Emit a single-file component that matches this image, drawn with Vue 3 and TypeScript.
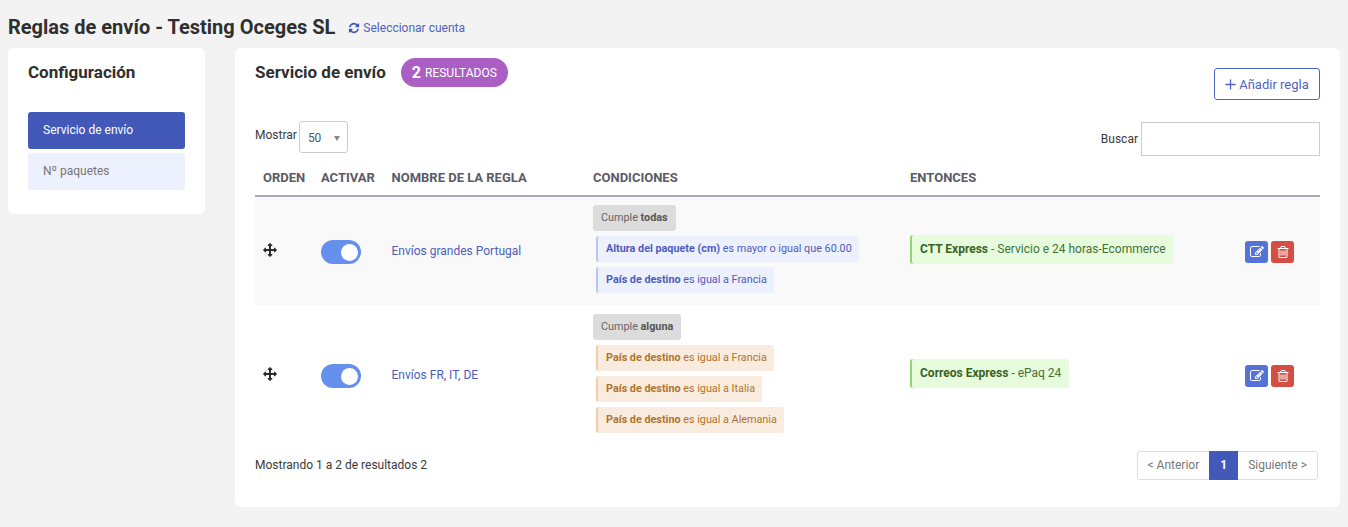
<script setup lang="ts">
interface Cond { field: string; text: string }
interface Rule {
  name: string
  mode: string
  tone: string
  conds: Cond[]
  carrier: string
  service: string
}
const rules: Rule[] = [
  {
    name: 'Envíos grandes Portugal',
    mode: 'todas',
    tone: 'blue',
    conds: [
      { field: 'Altura del paquete (cm)', text: 'es mayor o igual que 60.00' },
      { field: 'País de destino', text: 'es igual a Francia' }
    ],
    carrier: 'CTT Express',
    service: ' - Servicio e 24 horas-Ecommerce'
  },
  {
    name: 'Envíos FR, IT, DE',
    mode: 'alguna',
    tone: 'orange',
    conds: [
      { field: 'País de destino', text: 'es igual a Francia' },
      { field: 'País de destino', text: 'es igual a Italia' },
      { field: 'País de destino', text: 'es igual a Alemania' }
    ],
    carrier: 'Correos Express',
    service: ' - ePaq 24'
  }
]
</script>

<template>
  <div class="page">
    <header class="top">
      <h1>Reglas de envío - Testing Oceges SL</h1>
      <a class="account">
        <svg class="refresh" viewBox="0 0 1792 1792"><path d="M1639 1056q0 5-1 7-64 268-268 434.5t-478 166.5q-146 0-282.5-55t-243.5-157l-129 129q-19 19-45 19t-45-19-19-45v-448q0-26 19-45t45-19h448q26 0 45 19t19 45-19 45l-137 137q71 66 161 102t187 36q134 0 250-65t186-179q11-17 53-117 8-23 30-23h192q13 0 22.5 9.5t9.5 22.5zm25-800v448q0 26-19 45t-45 19h-448q-26 0-45-19t-19-45 19-45l138-138q-148-137-349-137-134 0-250 65t-186 179q-11 17-53 117-8 23-30 23h-199q-13 0-22.5-9.5t-9.5-22.5v-7q65-268 270-434.5t480-166.5q146 0 284 55.5t245 156.5l130-129q19-19 45-19t45 19 19 45z"/></svg>
        Seleccionar cuenta
      </a>
    </header>

    <div class="layout">
      <aside class="card side">
        <h2>Configuración</h2>
        <nav class="menu">
          <a class="item active">Servicio de envío</a>
          <a class="item">Nº paquetes</a>
        </nav>
      </aside>

      <main class="card content">
        <div class="head">
          <div class="head-left">
            <h2>Servicio de envío</h2>
            <span class="badge"><b>2</b> RESULTADOS</span>
          </div>
          <button class="add">
            <svg class="plus" viewBox="0 0 12 12"><path d="M6 0.5v11M0.5 6h11" /></svg>
            Añadir regla
          </button>
        </div>

        <div class="controls">
          <label class="show">
            Mostrar
            <span class="select">50<i class="caret"></i></span>
          </label>
          <label class="search">
            Buscar
            <span class="input"></span>
          </label>
        </div>

        <table class="rules">
          <colgroup>
            <col class="c1" /><col class="c2" /><col class="c3" /><col class="c4" /><col class="c5" /><col class="c6" />
          </colgroup>
          <thead>
            <tr>
              <th>ORDEN</th>
              <th>ACTIVAR</th>
              <th>NOMBRE DE LA REGLA</th>
              <th>CONDICIONES</th>
              <th>ENTONCES</th>
              <th></th>
            </tr>
          </thead>
          <tbody>
            <tr v-for="rule in rules" :key="rule.name">
              <td>
                <svg class="move" viewBox="0 0 1792 1792"><path d="M1792 896q0 26-19 45l-256 256q-19 19-45 19t-45-19-19-45v-128h-384v384h128q26 0 45 19t19 45-19 45l-256 256q-19 19-45 19t-45-19l-256-256q-19-19-19-45t19-45 45-19h128v-384h-384v128q0 26-19 45t-45 19-45-19l-256-256q-19-19-19-45t19-45l256-256q19-19 45-19t45 19 19 45v128h384v-384h-128q-26 0-45-19t-19-45 19-45l256-256q19-19 45-19t45 19l256 256q19 19 19 45t-19 45-45 19h-128v384h384v-128q0-26 19-45t45-19 45 19l256 256q19 19 19 45z"/></svg>
              </td>
              <td><span class="toggle"><i></i></span></td>
              <td><a class="name">{{ rule.name }}</a></td>
              <td>
                <div class="conds">
                  <span class="mode">Cumple&nbsp;<b>{{ rule.mode }}</b></span>
                  <span v-for="(c, i) in rule.conds" :key="i" class="cond" :class="rule.tone"><b>{{ c.field }}</b>&nbsp;{{ c.text }}</span>
                </div>
              </td>
              <td>
                <span class="then"><b>{{ rule.carrier }}</b>{{ rule.service }}</span>
              </td>
              <td>
                <div class="actions">
                  <button class="act edit">
                    <svg viewBox="0 0 1792 1792"><path d="M888 1184l116-116-152-152-116 116v56h96v96h56zm440-720q-16-16-33 1l-350 350q-17 17-1 33t33-1l350-350q17-17 1-33zm80 594v190q0 119-84.5 203.5t-203.5 84.5h-832q-119 0-203.5-84.5t-84.5-203.5v-832q0-119 84.5-203.5t203.5-84.5h832q63 0 117 25 15 7 18 23 3 17-9 29l-49 49q-14 14-32 8-23-6-45-6h-832q-66 0-113 47t-47 113v832q0 66 47 113t113 47h832q66 0 113-47t47-113v-126q0-13 9-22l64-64q15-15 35-7t20 29zm-96-738l288 288-672 672h-288v-288zm444 132l-92 92-288-288 92-92q28-28 68-28t68 28l152 152q28 28 28 68t-28 68z"/></svg>
                  </button>
                  <button class="act del">
                    <svg viewBox="0 0 1792 1792"><path d="M704 736v576q0 14-9 23t-23 9h-64q-14 0-23-9t-9-23v-576q0-14 9-23t23-9h64q14 0 23 9t9 23zm256 0v576q0 14-9 23t-23 9h-64q-14 0-23-9t-9-23v-576q0-14 9-23t23-9h64q14 0 23 9t9 23zm256 0v576q0 14-9 23t-23 9h-64q-14 0-23-9t-9-23v-576q0-14 9-23t23-9h64q14 0 23 9t9 23zm128 724v-948h-896v948q0 22 7 40.5t14.5 27 10.5 8.5h832q3 0 10.5-8.5t14.5-27 7-40.5zm-672-1076h448l-48-117q-7-9-17-11h-317q-10 2-17 11zm928 32v64q0 14-9 23t-23 9h-96v948q0 83-47 143.5t-113 60.5h-832q-66 0-113-58.5t-47-141.5v-952h-96q-14 0-23-9t-9-23v-64q0-14 9-23t23-9h309l70-167q15-37 54-63t79-26h320q40 0 79 26t54 63l70 167h309q14 0 23 9t9 23z"/></svg>
                  </button>
                </div>
              </td>
            </tr>
          </tbody>
        </table>

        <div class="foot">
          <span class="summary">Mostrando 1 a 2 de resultados 2</span>
          <div class="pager">
            <a>&lt; Anterior</a>
            <a class="current">1</a>
            <a>Siguiente &gt;</a>
          </div>
        </div>
      </main>
    </div>
  </div>
</template>

<style>
html, body { margin: 0; background: #f3f3f3; }
</style>

<style scoped>
.page {
  font-family: Roboto, "Liberation Sans", sans-serif;
  font-size: 12px;
  color: #3a3a3a;
  background: #f3f3f3;
  height: 527px;
  padding: 0 8px;
  box-sizing: border-box;
  overflow: hidden;
}
.top { display: flex; align-items: center; height: 48px; padding-top: 5px; box-sizing: border-box; }
h1 { margin: 0; font-size: 20px; font-weight: 700; color: #2f2f2f; line-height: 24px; }
.account { display: flex; align-items: center; gap: 3px; margin-left: 13px; margin-top: 2px; color: #4f62c0; font-size: 12px; }
.refresh { width: 12px; height: 12px; fill: #3f58b8; }
.layout { display: flex; gap: 30px; align-items: flex-start; }
.card { background: #fff; border-radius: 6px; box-sizing: border-box; }
.side { width: 197px; height: 166px; padding: 14px 20px; }
h2 { margin: 0; font-size: 17px; font-weight: 700; color: #2f2f2f; line-height: 20px; }
.menu { margin-top: 30px; display: flex; flex-direction: column; gap: 4px; }
.item { display: flex; align-items: center; height: 37px; padding: 0 0 2px 15px; box-sizing: border-box; border-radius: 3px; background: #edf0fd; color: #777; }
.item.active { background: #4359b9; color: #fff; }
.content { width: 1105px; height: 459px; padding: 10px 20px 0; }
.head { display: flex; justify-content: space-between; align-items: flex-start; height: 63px; }
.head-left { display: flex; align-items: center; gap: 15px; height: 29px; }
.head-left h2 { padding-bottom: 1px; }
.badge { display: flex; align-items: center; gap: 4px; height: 29px; padding: 0 11px; background: #ab5fc4; color: #fff; border-radius: 15px; font-size: 12px; font-weight: 400; }
.badge b { font-size: 16px; font-weight: 700; }
.add { margin-top: 10px; display: flex; align-items: center; justify-content: center; gap: 3px; width: 106px; height: 32px; background: #fff; border: 1px solid #4d66cc; border-radius: 3px; color: #4f62c0; font: 13px Roboto, sans-serif; padding: 0; }
.plus { width: 11px; height: 11px; stroke: #4f62c0; stroke-width: 1.4; fill: none; }
.controls { display: flex; justify-content: space-between; align-items: flex-start; height: 38px; }
.show { display: flex; align-items: flex-start; gap: 2px; line-height: 29px; font-size: 12px; }
.select { display: flex; align-items: center; justify-content: space-between; box-sizing: border-box; width: 49px; height: 32px; padding: 2px 7px 0 8px; border: 1px solid #ccc; border-radius: 3px; font-size: 12px; color: #4a5a6a; }
.caret { width: 0; height: 0; border-left: 3px solid transparent; border-right: 3px solid transparent; border-top: 5px solid #888; }
.search { display: flex; align-items: center; gap: 3px; margin-top: 1px; font-size: 12px; }
.input { display: block; box-sizing: border-box; width: 179px; height: 34px; border: 1px solid #ccc; }
.rules { width: 1065px; table-layout: fixed; border-collapse: collapse; }
.c1 { width: 58px; } .c2 { width: 70.5px; } .c3 { width: 201.5px; } .c4 { width: 317px; } .c5 { width: 335px; } .c6 { width: 83px; }
th { text-align: left; padding: 1px 8px 0; height: 37px; box-sizing: border-box; font-size: 13px; font-weight: 700; color: #5a5a68; border-bottom: 2px solid #a8a8b6; }
td { padding: 8px; vertical-align: middle; }
tbody tr:nth-child(odd) { background: #f9f9f9; }
.move { display: block; width: 14px; height: 14px; fill: #2b2b2b; margin-top: -3px; }
.toggle { display: flex; justify-content: flex-end; align-items: center; width: 40px; height: 24px; margin-top: 2px; padding-right: 3px; box-sizing: border-box; border-radius: 12px; background: #6690ee; }
.toggle i { display: block; width: 17px; height: 17px; border-radius: 50%; background: #fff; }
.name { color: #4d5dbb; }
.conds { display: flex; flex-direction: column; align-items: flex-start; gap: 5px; margin-bottom: 4px; }
tr + tr .conds { margin-top: 1px; }
.mode { display: flex; align-items: center; height: 26px; padding: 0 8px 2px; box-sizing: border-box; background: #dcdcdc; border-radius: 3px; font-size: 10.8px; color: #666; }
.mode b { color: #555; }
.cond { display: flex; align-items: center; height: 26px; box-sizing: border-box; margin-left: 3px; padding: 0 7px 2px 8px; border-left: 2px solid; border-radius: 3px; font-size: 10.8px; white-space: nowrap; }
.cond.blue { background: #edf0fd; border-color: #b9c6ee; color: #4d5dbb; }
.cond.orange { background: #f9ecdf; border-color: #efcfa9; color: #b0742d; }
.then { display: flex; width: fit-content; align-items: center; height: 29px; margin-bottom: 3px; box-sizing: border-box; padding: 0 8px 2px; background: #e7fcdc; border-left: 2px solid #8fd870; border-radius: 3px; color: #44703a; font-size: 12px; white-space: pre; }
.then b { color: #38631f; }
.actions { display: flex; gap: 3px; margin-top: 2px; }
.act { display: flex; align-items: center; justify-content: center; width: 23px; height: 22px; padding: 0; border: 0; border-radius: 3px; }
.act svg { width: 14px; height: 14px; fill: #fff; }
.edit { background: #5572d8; }
.del { background: #d34f43; }
.foot { display: flex; justify-content: space-between; align-items: center; padding: 6px 2px 0 0; }
.summary { padding-bottom: 2px; }
.pager { display: flex; height: 29px; box-sizing: border-box; border: 1px solid #ddd; border-radius: 3px; color: #777; }
.pager a { display: flex; align-items: center; padding: 0 10px 2px; }
.pager .current { background: #4359b9; color: #fff; font-weight: 700; margin: -1px 0; padding: 0 11px 2px; }
</style>
